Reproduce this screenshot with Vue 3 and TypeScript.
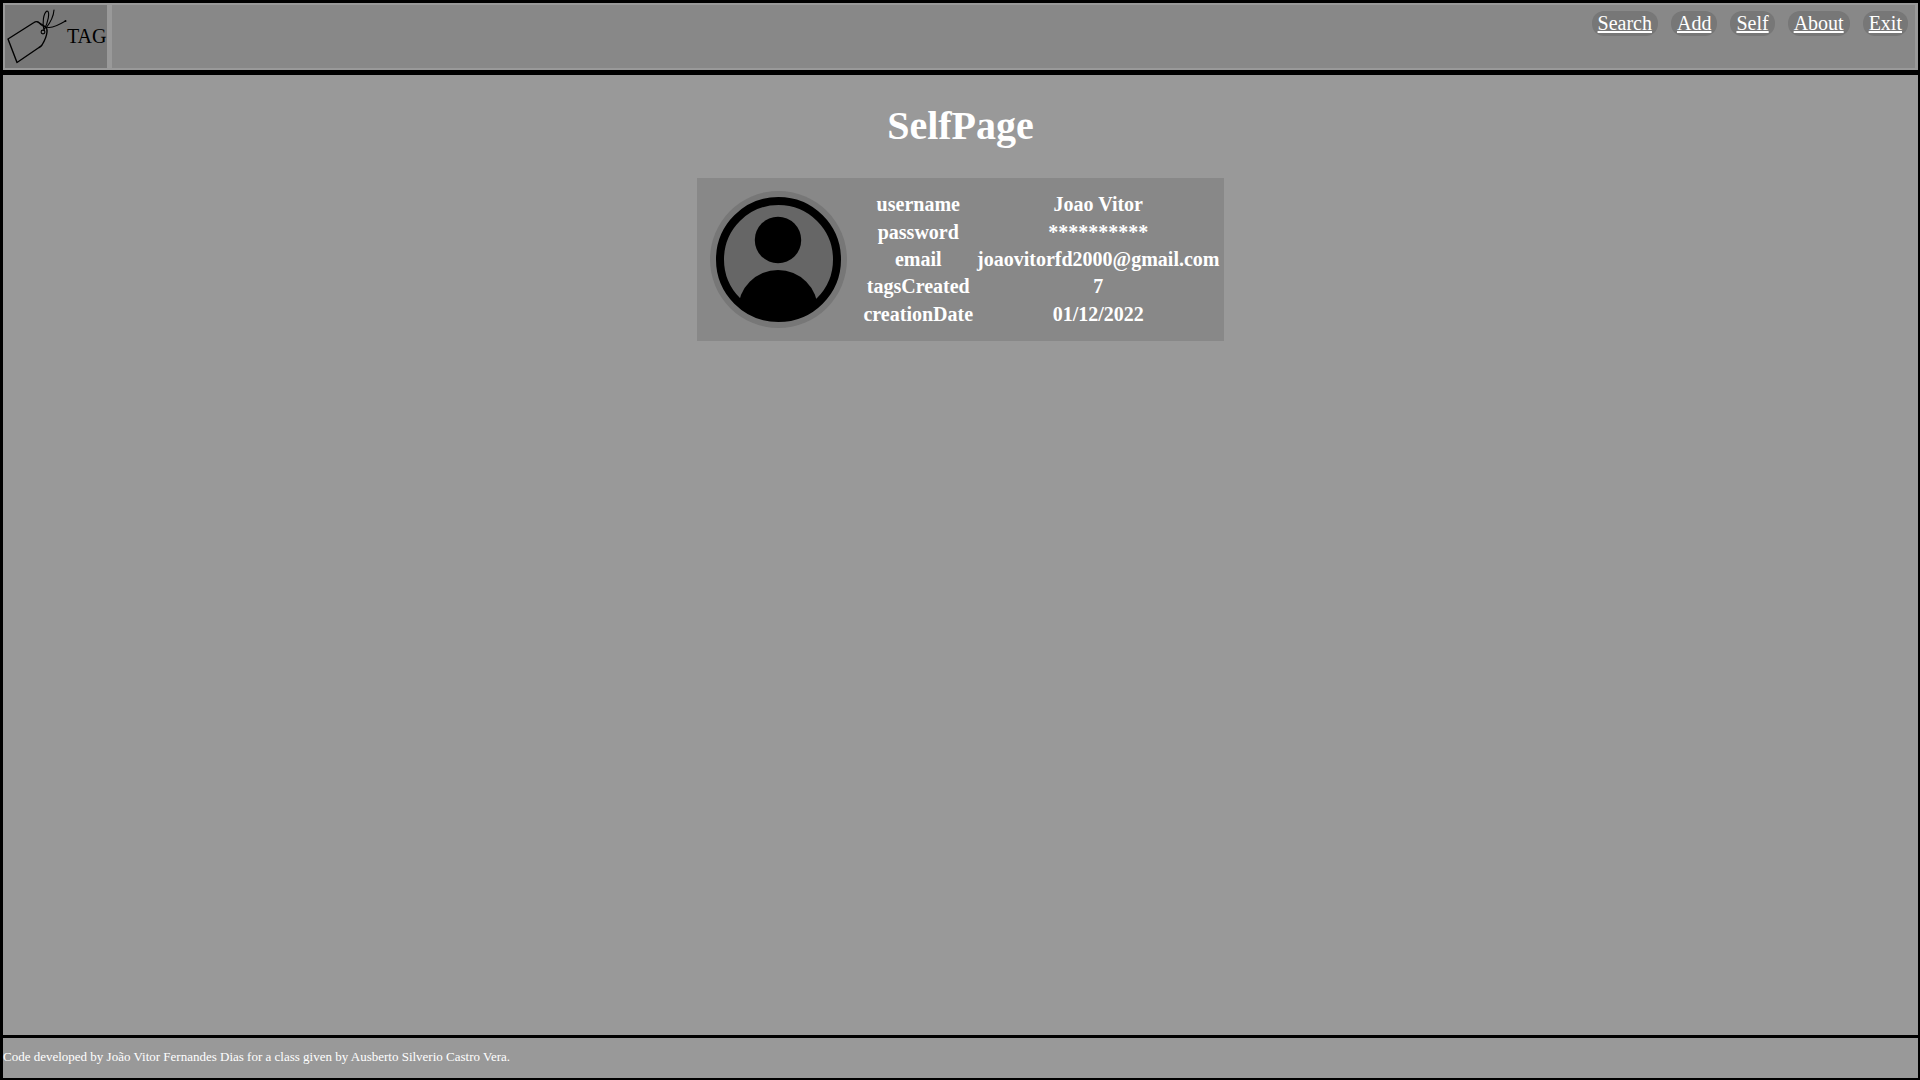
<script setup lang="ts">
interface NavLink {
  label: string
  href: string
}

interface ProfileRow {
  field: string
  value: string
}

const links: NavLink[] = [
  { label: 'Search', href: '#search' },
  { label: 'Add', href: '#add' },
  { label: 'Self', href: '#self' },
  { label: 'About', href: '#about' },
  { label: 'Exit', href: '#exit' },
]

const profile: ProfileRow[] = [
  { field: 'username', value: 'Joao Vitor' },
  { field: 'password', value: '**********' },
  { field: 'email', value: 'joaovitorfd2000@gmail.com' },
  { field: 'tagsCreated', value: '7' },
  { field: 'creationDate', value: '01/12/2022' },
]
</script>

<template>
  <div class="page">
    <header class="header">
      <div class="brand">
        <svg class="brand-icon" viewBox="0 0 62 63" aria-hidden="true">
          <g fill="none" stroke="#000" stroke-linejoin="round" stroke-linecap="round">
            <path stroke-width="1.4" d="M3 34 L29 17.500 Q31 16 33 17 L40 21.500 Q42.500 23 42 27 C41.500 32 39.500 36 37 40 Q36 41.500 34 42.500 L12 57.500 Z" />
            <circle cx="38" cy="27" r="1.900" stroke-width="1.1" />
            <path stroke-width="1.1" d="M39 25 C37 18 38.500 8 42 6 C45.500 6 43 18 39 25" />
            <path stroke-width="1.1" d="M49 5 C48.500 12 45 18 41 23" />
            <path stroke-width="1.1" d="M33 17 C40 25 47 24 60.500 16" />
          </g>
          <circle cx="60.500" cy="16" r="1" />
        </svg>
        <span>TAG</span>
      </div>
      <nav class="nav">
        <a v-for="link in links" :key="link.label" :href="link.href">{{ link.label }}</a>
      </nav>
    </header>

    <main class="main">
      <h1>SelfPage</h1>
      <section class="card">
        <svg class="avatar" viewBox="0 0 137 137" role="img" aria-label="Profile picture">
          <defs>
            <clipPath id="avatar-clip"><circle cx="68.500" cy="68.500" r="60" /></clipPath>
          </defs>
          <circle cx="68.500" cy="68.500" r="68.500" fill="#777" />
          <circle cx="68.500" cy="68.500" r="58.500" fill="#666" stroke="#000" stroke-width="8" />
          <circle cx="68" cy="49" r="23.200" />
          <circle cx="68" cy="119" r="40" clip-path="url(#avatar-clip)" />
        </svg>
        <table>
          <tbody>
            <tr v-for="row in profile" :key="row.field">
              <th scope="row">{{ row.field }}</th>
              <td>{{ row.value }}</td>
            </tr>
          </tbody>
        </table>
      </section>
    </main>

    <footer class="footer">
      Code developed by João Vitor Fernandes Dias for a class given by Ausberto Silverio Castro Vera.
    </footer>
  </div>
</template>

<style>
body {
  margin: 0;
  background: #000;
}
</style>

<style scoped>
.page {
  box-sizing: border-box;
  min-height: 100vh;
  display: flex;
  flex-direction: column;
  border: solid #000;
  border-width: 3px 2px 2px 3px;
  background: #999;
  color: #fff;
  font-family: "Liberation Serif", "Times New Roman", serif;
  font-size: 20px;
}

.header {
  display: flex;
  gap: 5px;
  padding: 2px 3px 2px 2px;
  border-bottom: 5px solid #000;
}

.brand {
  display: flex;
  align-items: center;
  height: 63px;
  background: #777;
  color: #000;
}

.brand-icon {
  width: 62px;
  height: 63px;
}

.nav {
  flex: 1;
  display: flex;
  justify-content: flex-end;
  align-items: flex-start;
  gap: 13px;
  padding: 6px 7px 0 0;
  background: #888;
}

.nav a {
  padding: 0 6px;
  border-radius: 12px;
  background: #777;
  color: #fff;
  line-height: 25px;
}

.main {
  flex: 1;
  display: flex;
  flex-direction: column;
  align-items: center;
}

h1 {
  margin: 28px 0 30px;
  font-size: 40px;
  line-height: 45px;
}

.card {
  display: flex;
  align-items: center;
  gap: 13px;
  padding: 12px 1px 12px 13px;
  background: #888;
}

.avatar {
  width: 137px;
  height: 137px;
}

table {
  height: 139px;
  border-spacing: 2px;
  text-align: center;
  font-weight: bold;
}

th,
td {
  padding: 1px;
}

.footer {
  padding-bottom: 2px;
  border-top: 3px solid #000;
  font-size: 13px;
  line-height: 38px;
}
</style>
